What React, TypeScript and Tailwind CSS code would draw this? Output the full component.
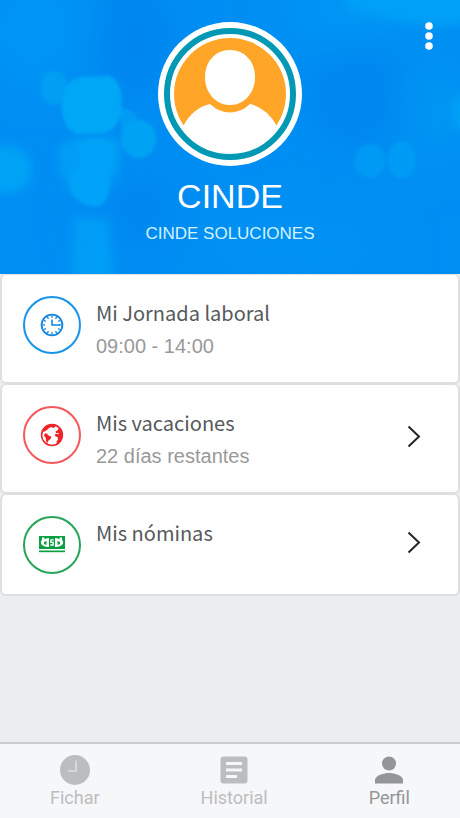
import type { ReactNode } from "react";

const titleFont = "font-['Noto_Sans_CJK_SC','Noto_Sans',sans-serif]";
const arial = "font-['Liberation_Sans',Arial,sans-serif]";
const roboto = "font-[Roboto,sans-serif]";

function HeaderBackdrop() {
  return (
    <svg
      className="absolute inset-0 h-full w-full"
      viewBox="0 0 460 274"
      preserveAspectRatio="none"
      aria-hidden="true"
    >
      <defs>
        <filter id="soft" x="-50%" y="-50%" width="200%" height="200%">
          <feGaussianBlur stdDeviation="24" />
        </filter>
        <filter id="mid" x="-50%" y="-50%" width="200%" height="200%">
          <feGaussianBlur stdDeviation="5" />
        </filter>
        <filter id="crisp" x="-50%" y="-50%" width="200%" height="200%">
          <feGaussianBlur stdDeviation="1.5" />
        </filter>
      </defs>
      <rect width="460" height="274" fill="#008ef3" />
      <g filter="url(#soft)">
        <ellipse cx="40" cy="30" rx="60" ry="50" fill="#0096f5" />
        <ellipse cx="130" cy="40" rx="40" ry="60" fill="#0085ef" />
        <ellipse cx="360" cy="95" rx="50" ry="50" fill="#0086f0" />
        <ellipse cx="140" cy="210" rx="50" ry="50" fill="#0089f1" />
        <ellipse cx="350" cy="10" rx="60" ry="30" fill="#0098f5" />
        <ellipse cx="435" cy="110" rx="30" ry="50" fill="#0098f3" />
        <ellipse cx="290" cy="250" rx="100" ry="30" fill="#0093f3" />
      </g>
      <g filter="url(#mid)">
        <path d="M340 -10H470V22Q440 30 420 24Q380 20 350 8Z" fill="#00a0f6" />
        <ellipse cx="6" cy="170" rx="26" ry="24" fill="#00a3f6" />
        <path d="M58 146Q90 130 122 142L118 176L104 190H72L60 172Z" fill="#009ef5" />
        <path d="M74 218H108L114 280H72Z" fill="#009ef6" />
        <ellipse cx="464" cy="112" rx="10" ry="18" fill="#00a5f7" />
      </g>
      <g filter="url(#crisp)">
        <ellipse cx="54" cy="88" rx="13" ry="17" fill="#009ff3" />
        <path d="M80 77L110 76Q121 82 121 96L122 110Q118 130 104 133L76 134Q64 128 62 112Q60 82 80 77Z" fill="#00a7f7" />
        <path d="M121 108Q137 110 138 124L121 148Z" fill="#009cf4" />
        <ellipse cx="139" cy="139" rx="17" ry="19" fill="#00a3f3" />
        <path d="M78 144Q98 134 114 144Q116 158 109 172Q112 192 104 203Q96 210 84 204Q68 196 70 180Q72 170 80 165Z" fill="#00a3f7" />
        <ellipse cx="370" cy="161" rx="16" ry="17" fill="#0099f3" />
        <ellipse cx="402" cy="160" rx="14" ry="19" fill="#009bf4" />
      </g>
    </svg>
  );
}

function Avatar() {
  return (
    <svg className="size-36" viewBox="0 0 144 144" role="img" aria-label="CINDE">
      <defs>
        <clipPath id="face">
          <circle cx="72" cy="72" r="57" />
        </clipPath>
      </defs>
      <circle cx="72" cy="72" r="72" fill="#fff" />
      <circle cx="72" cy="72" r="63" fill="none" stroke="#0398b3" strokeWidth="6" />
      <circle cx="72" cy="72" r="56" fill="#ffa629" />
      <g clipPath="url(#face)" fill="#fff">
        <path d="M72 28C87 28 97 40 97 55C97 70 87 83 72 83C57 83 47 70 47 55C47 40 57 28 72 28Z" />
        <path d="M52 82Q61 90.500 72 90.500Q83 90.500 92 82Q109 86 118.500 103.500L126 136H18L25.500 103.500Q35 86 52 82Z" />
      </g>
    </svg>
  );
}

function ClockIcon() {
  const ticks = Array.from({ length: 12 }, (_, i) => i * 30);
  return (
    <svg className="size-7" viewBox="0 0 28 28" fill="none" stroke="#1485e0" aria-hidden="true">
      <circle cx="14" cy="14" r="10.400" strokeWidth="1.800" />
      {ticks.map((a) => (
        <path key={a} d="M14 4.500V7" strokeWidth="1.300" transform={`rotate(${a} 14 14)`} />
      ))}
      <path d="M14 8.500V14H22" strokeWidth="1.600" />
    </svg>
  );
}

function GlobeIcon() {
  return (
    <svg className="size-7" viewBox="0 0 28 28" fill="#ee2428" aria-hidden="true">
      <circle cx="14" cy="14" r="10.400" fill="none" stroke="#ee2428" strokeWidth="1.500" />
      <path d="M6 7.500Q9 3.500 14 3.200Q18 3.200 20 5L17 5.800L15.500 7.200L13.500 6L11 7L9 9L6.500 10.500L4.500 11Z" />
      <path d="M6.800 12.200L9 12.800L10.500 14.500L13.500 15.800L12.500 18L10.500 19.500L9.500 22L8 20L7.800 17L6 14.800Z" />
      <path d="M17.500 10.500L20 9L20.500 7L22 7.500Q25.500 12 24.300 16.500Q22.500 21.500 19 23L18.500 20.500L20 18.500L19.500 16L17.500 15.500L16.800 13.500L18.500 12.800L20.500 13.200L21 12L18 12Z" />
    </svg>
  );
}

function MoneyIcon() {
  return (
    <svg className="size-7" viewBox="0 0 28 28" aria-hidden="true">
      <rect x="1" y="5" width="26" height="13" fill="#0c9f42" />
      <rect x="1" y="19.500" width="26" height="1.700" fill="#0c9f42" />
      <g fill="#fff">
        <path fillRule="evenodd" d="M4 6.500H6.500V8.500Q8 6.800 11 7V16Q6 16.200 3 13V10L4 9ZM6 11V13L8.500 14V10Z" />
        <path fillRule="evenodd" d="M24 6.500H21.500V8.500Q20 6.800 17 7V16Q22 16.200 25 13V10L24 9ZM22 11V13L19.500 14V10Z" />
      </g>
      <path d="M15.700 8.800H12.900V11.300H15.200V14H12.300" fill="none" stroke="#fff" strokeWidth="1.300" />
    </svg>
  );
}

function Chevron() {
  return (
    <svg
      className="mb-1.5 h-6 w-4 shrink-0"
      viewBox="0 0 16 24"
      fill="none"
      stroke="#1f262c"
      strokeWidth="2"
      aria-hidden="true"
    >
      <path d="M2.500 2.500L13 12.500L2.500 22.500" />
    </svg>
  );
}

type CardProps = { icon: ReactNode; ring: string; title: string; detail?: string; link?: boolean };

function Card({ icon, ring, title, detail, link }: CardProps) {
  const body = (
    <>
      <span className={`flex size-[58px] shrink-0 items-center justify-center self-start rounded-full border-2 ${ring}`}>
        {icon}
      </span>
      <span className="flex flex-1 flex-col self-start">
        <span className={`${titleFont} text-xl leading-[34px] text-[#55595c]`}>{title}</span>
        {detail && <span className={`${arial} text-xl leading-8 text-[#999]`}>{detail}</span>}
      </span>
      {link && <Chevron />}
    </>
  );
  const box =
    "flex w-full items-center gap-[15px] rounded-md border-2 border-t border-[#dedfe0] bg-white pr-9 pl-[21px] pt-[21px] pb-5 text-left";
  return link ? <button className={box}>{body}</button> : <div className={box}>{body}</div>;
}

type TabProps = { icon: ReactNode; label: string; active?: boolean };

function Tab({ icon, label, active }: TabProps) {
  return (
    <button
      aria-current={active ? "page" : undefined}
      className={`flex flex-col items-center ${roboto} text-lg leading-6 ${
        active ? "text-[#949596]" : "text-[#bcbdbe]"
      }`}
    >
      {icon}
      {label}
    </button>
  );
}

export default function App() {
  return (
    <div className="flex min-h-screen flex-col bg-[#ecedee]">
      <header className="relative flex flex-col items-center bg-[#008ef3] pt-[22px] pb-[26px] text-white">
        <HeaderBackdrop />
        <button className="absolute top-5 right-[15px] flex h-8 w-8 items-center justify-center" aria-label="Menú">
          <svg className="h-8 w-2" viewBox="0 0 8 32" fill="currentColor" aria-hidden="true">
            <circle cx="4" cy="6" r="3.800" />
            <circle cx="4" cy="16" r="3.800" />
            <circle cx="4" cy="26" r="3.800" />
          </svg>
        </button>
        <div className="relative flex flex-col items-center">
          <Avatar />
          <h1 className={`${arial} mt-2.5 text-[34px] leading-10`}>CINDE</h1>
          <p className={`${arial} mt-1 text-[17px] leading-7 text-[#d5f1ff]`}>CINDE SOLUCIONES</p>
        </div>
      </header>
      <main className="flex-1">
        <Card icon={<ClockIcon />} ring="border-[#1795ea]" title="Mi Jornada laboral" detail="09:00 - 14:00" />
        <Card icon={<GlobeIcon />} ring="border-[#f4595b]" title="Mis vacaciones" detail="22 días restantes" link />
        <Card icon={<MoneyIcon />} ring="border-[#27a55a]" title="Mis nóminas" link />
      </main>
      <nav className="flex justify-between border-t-2 border-[#c8cacc] bg-[#f5f7f9] px-[50px] pt-2.5 pb-2">
        <Tab
          label="Fichar"
          icon={
            <svg className="size-8" viewBox="0 0 32 32" aria-hidden="true">
              <circle cx="16" cy="16" r="15" fill="currentColor" />
              <path d="M17 6.500V17H9" fill="none" stroke="#dcdddc" strokeWidth="1.600" />
            </svg>
          }
        />
        <Tab
          label="Historial"
          icon={
            <svg className="size-8" viewBox="0 0 32 32" aria-hidden="true">
              <rect x="2.500" y="2.500" width="27" height="27" rx="3" fill="currentColor" />
              <path d="M8 9.500H24M8 16H24M8 22.500H19" stroke="#f5f7f9" strokeWidth="3" />
            </svg>
          }
        />
        <Tab
          active
          label="Perfil"
          icon={
            <svg className="size-8" viewBox="0 0 32 32" fill="currentColor" aria-hidden="true">
              <circle cx="16" cy="9.500" r="7" />
              <path d="M2 29.500V26C2 21.500 11 19 16 19S30 21.500 30 26V29.500Z" />
            </svg>
          }
        />
      </nav>
    </div>
  );
}
